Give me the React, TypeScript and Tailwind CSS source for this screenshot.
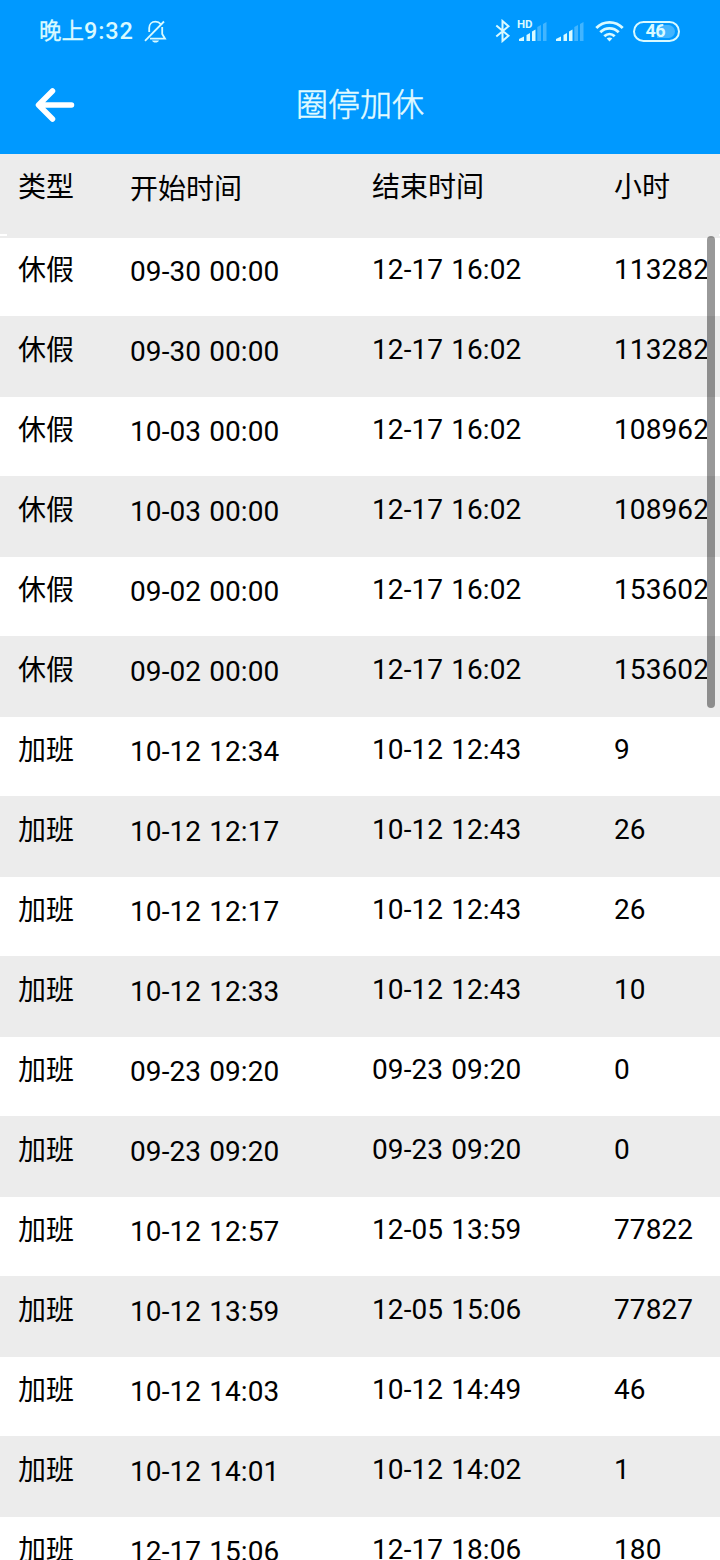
type Entry = [string, string, string, string];

const entries: Entry[] = [
  ["休假", "09-30 00:00", "12-17 16:02", "113282"],
  ["休假", "09-30 00:00", "12-17 16:02", "113282"],
  ["休假", "10-03 00:00", "12-17 16:02", "108962"],
  ["休假", "10-03 00:00", "12-17 16:02", "108962"],
  ["休假", "09-02 00:00", "12-17 16:02", "153602"],
  ["休假", "09-02 00:00", "12-17 16:02", "153602"],
  ["加班", "10-12 12:34", "10-12 12:43", "9"],
  ["加班", "10-12 12:17", "10-12 12:43", "26"],
  ["加班", "10-12 12:17", "10-12 12:43", "26"],
  ["加班", "10-12 12:33", "10-12 12:43", "10"],
  ["加班", "09-23 09:20", "09-23 09:20", "0"],
  ["加班", "09-23 09:20", "09-23 09:20", "0"],
  ["加班", "10-12 12:57", "12-05 13:59", "77822"],
  ["加班", "10-12 13:59", "12-05 15:06", "77827"],
  ["加班", "10-12 14:03", "10-12 14:49", "46"],
  ["加班", "10-12 14:01", "10-12 14:02", "1"],
  ["加班", "12-17 15:06", "12-17 18:06", "180"],
];

function Row({ cells, className }: { cells: Entry; className: string }) {
  return (
    <div
      className={`grid shrink-0 grid-cols-[112px_242px_242px_93px] pl-[18px] text-[28px] leading-[40px] whitespace-nowrap [word-spacing:0.9px] ${className}`}
    >
      <div>{cells[0]}</div>
      <div className="pt-[2px]">{cells[1]}</div>
      <div>{cells[2]}</div>
      <div className="overflow-hidden">{cells[3]}</div>
    </div>
  );
}

function Signal() {
  return (
    <svg width="28" height="21" viewBox="0 0 28 21" fill="#d9faff">
      <path d="M0 20V18L5 15.5V20Z" />
      <path d="M7.5 20V14L11 12V20Z" />
      <path d="M13 20V10.5L16.5 8.5V20Z" />
      <path d="M18.3 20V6L22 4V20Z" opacity=".3" />
      <path d="M24 20V3L27.5 1V20Z" opacity=".3" />
    </svg>
  );
}

function StatusBar() {
  return (
    <div className="flex h-[60px] items-center pt-[2px] pl-[39px] text-[#d9faff]">
      <span className="w-[45px] text-[22.5px] leading-[32px] font-normal [-webkit-text-stroke:0.3px_#d9faff]">晚上</span>
      <span className="text-[23.5px] leading-[32px] font-medium tracking-[0.9px]">9:32</span>
      <svg className="ml-[10px]" width="23" height="23" viewBox="0 0 23 23" fill="none" stroke="currentColor" strokeWidth="1.8">
        <path d="M16.8 4.3C15.4 2.5 13.5 1.7 11.5 1.7C7.5 1.7 5.2 4.5 5.2 8V12M18.2 7V14L21 18.7H6" />
        <path d="M1 20.8L20 1.5" />
        <path d="M8 20.5H15C14.3 22 13.2 22.5 11.5 22.5C9.8 22.5 8.7 22 8 20.5Z" fill="currentColor" stroke="none" />
      </svg>
      <svg className="ml-[328px]" width="16" height="24" viewBox="0 0 16 24" fill="none" stroke="currentColor" strokeWidth="2">
        <path d="M1.3 6.5L13.5 16.7L7.5 22V2L13.5 7.2L1.3 17.4" />
      </svg>
      <div className="relative ml-[8px] h-[21px] w-[28px]">
        <Signal />
        <span className="absolute -top-[2px] -left-[2px] text-[11.5px] leading-[11px] font-bold">HD</span>
      </div>
      <div className="ml-[9px]">
        <Signal />
      </div>
      <svg className="ml-[11px]" width="29" height="22" viewBox="0 0 29 22" fill="none" stroke="currentColor" strokeWidth="2.8">
        <path d="M1.3 8C8.5.4 20.5.4 27.7 8M5.3 12.2C10.5 7 18.5 7 23.7 12.2M9.3 16.2C12.4 13.3 16.6 13.3 19.7 16.2" />
        <path d="M11.7 18.6C13.2 17.2 15.8 17.2 17.3 18.6L14.5 21.5Z" fill="currentColor" stroke="none" />
      </svg>
      <div className="relative ml-[9px] flex h-[21px] w-[47px] items-center justify-center rounded-full border-2 border-[#d9faff]">
        <div className="absolute top-[2px] right-[3px] h-[13px] w-[18px] rounded-r-full bg-[#d9faff]/30" />
        <span className="relative -left-[1px] text-[18px] leading-[18px] font-bold tracking-[-0.5px]">46</span>
      </div>
    </div>
  );
}

export default function App() {
  return (
    <div className="relative flex h-[1560px] w-[720px] flex-col overflow-hidden bg-white font-[Roboto,'Noto_Sans_CJK_SC',sans-serif] text-black">
      <header className="h-[154px] shrink-0 bg-[#0099ff]">
        <StatusBar />
        <div className="grid h-[90px] grid-cols-[1fr_auto_1fr] items-center pl-[35px]">
          <svg width="40" height="36" viewBox="0 0 40 36" fill="none" stroke="white" strokeWidth="5.5" strokeLinecap="round" strokeLinejoin="round">
            <path d="M17.5 4L3.5 18L17.5 32M4 18H36.5" />
          </svg>
          <h1 className="-ml-[35px] text-[32px] leading-[48px] font-light text-[#e2fbff] [-webkit-text-stroke:0.5px_#e2fbff]">
            圈停加休
          </h1>
        </div>
      </header>
      <Row cells={["类型", "开始时间", "结束时间", "小时"]} className="h-[84px] bg-[#ececec] pt-[14px]" />
      {entries.map((entry, i) => (
        <Row
          key={i}
          cells={entry}
          className={
            i === 0
              ? "h-[78px] bg-white pt-[12px] tracking-[0.1px] *:first:pt-px"
              : i % 2
                ? "h-[81px] bg-[#ececec] pt-[14px] tracking-[0.1px] *:first:pt-px"
                : "h-[79px] bg-white pt-[13px] tracking-[0.1px] *:first:pt-px"
          }
        />
      ))}
      <div className="absolute top-[234px] left-0 h-[2px] w-[7px] bg-white" />
      <div className="absolute top-[234px] left-[719px] h-[2px] w-px bg-white" />
      <div className="absolute top-[236px] left-[707px] h-[472px] w-[8px] rounded-full bg-black/40" />
    </div>
  );
}
